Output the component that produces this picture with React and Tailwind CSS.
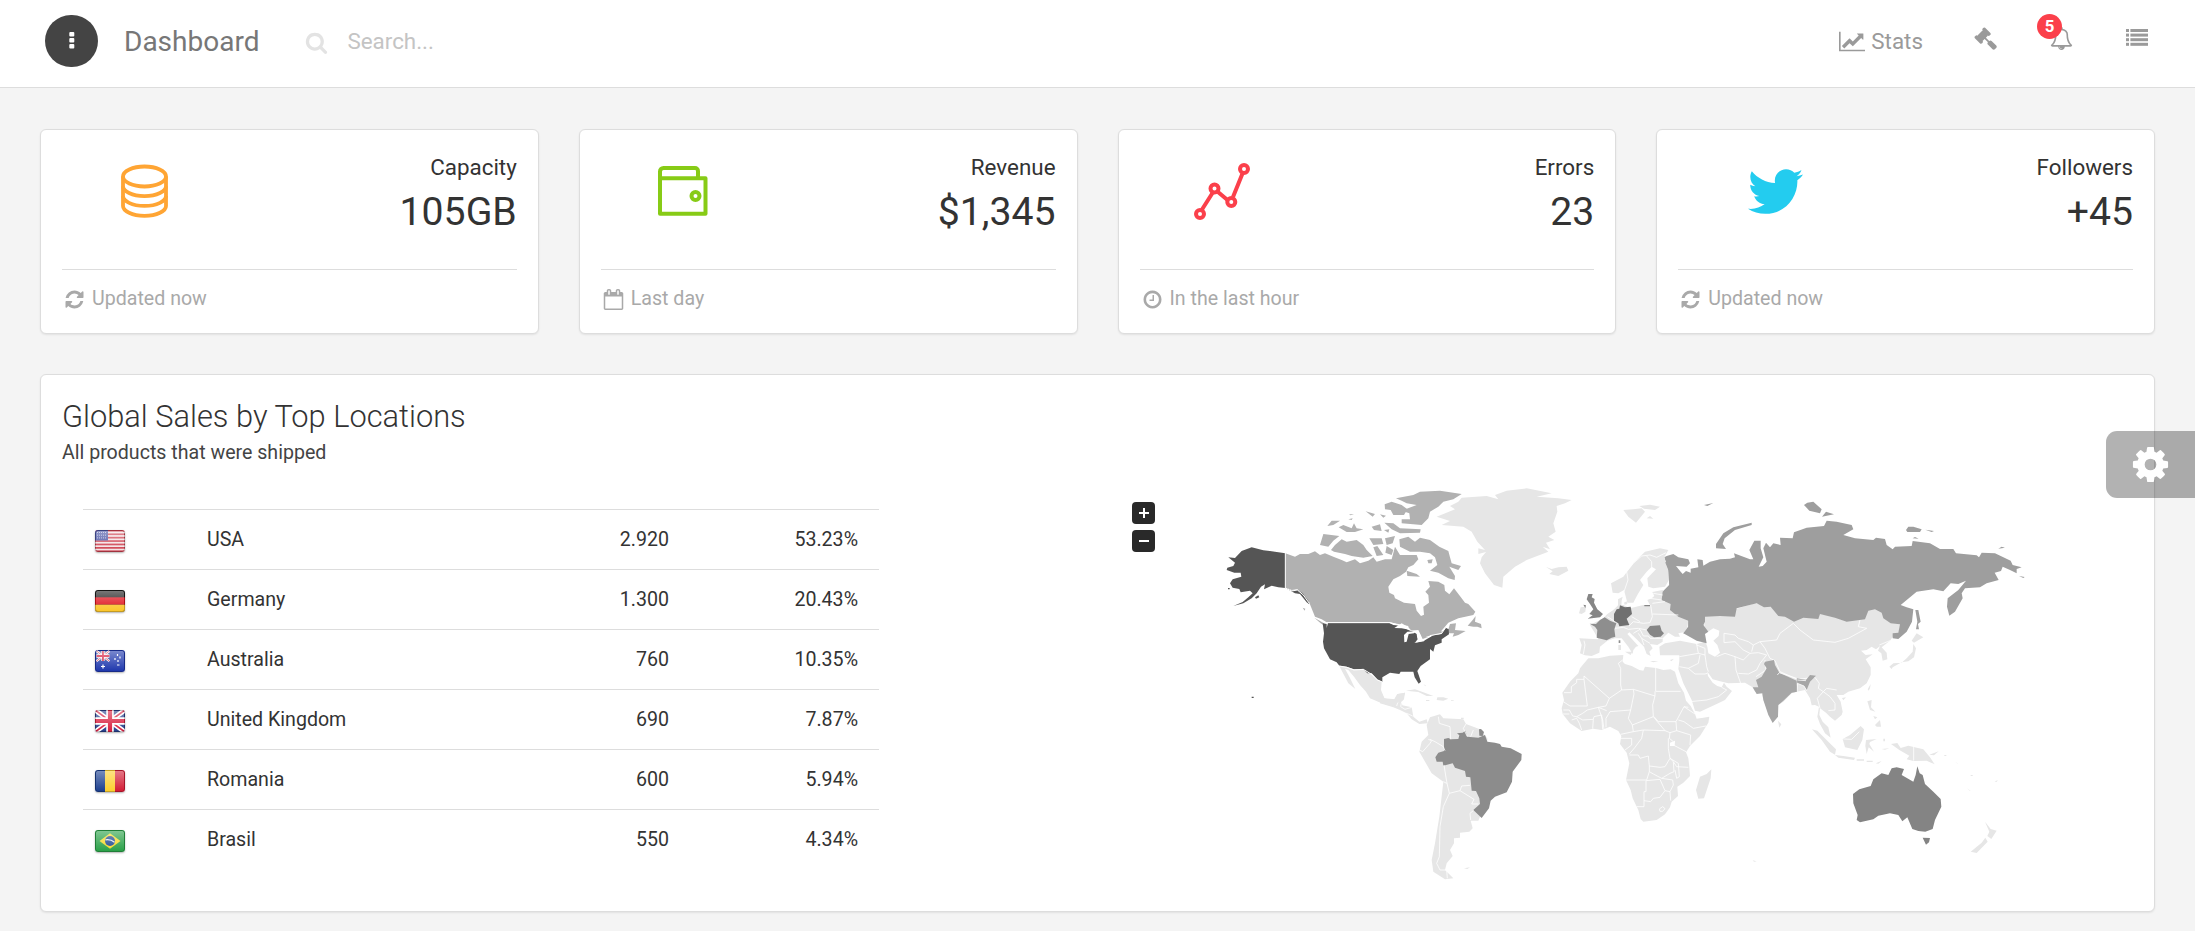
import React from "react";
import { FaTwitter } from "react-icons/fa";

const ICONS = {
  refresh:
    "M1639 1056q0 5-1 7-64 268-268 434.5t-478 166.5q-146 0-282.5-55t-243.5-157l-129 129q-19 19-45 19t-45-19-19-45v-448q0-26 19-45t45-19h448q26 0 45 19t19 45-19 45l-137 137q71 66 161 102t187 36q134 0 250-65t186-179q11-17 53-117 8-23 30-23h192q13 0 22.5 9.5t9.5 22.5zm25-800v448q0 26-19 45t-45 19h-448q-26 0-45-19t-19-45 19-45l138-138q-148-137-349-137-134 0-250 65t-186 179q-11 17-53 117-8 23-30 23h-199q-13 0-22.5-9.5t-9.5-22.5v-7q65-268 270-434.5t480-166.5q146 0 284 55.5t245 156.5l130-129q19-19 45-19t45 19 19 45z",
  chart:
    "M2048 1536v128h-2048v-1536h128v1408h1920zm-128-1248v435q0 21-19.5 29.5t-35.5-7.5l-121-121-633 633q-10 10-23 10t-23-10l-233-233-416 416-192-192 585-585q10-10 23-10t23 10l233 233 464-464-121-121q-16-16-7.5-35.5t29.5-19.5h435q14 0 23 9t9 23z",
  gavel:
    "M1771 1536q0 53-37 90l-107 108q-39 37-91 37-53 0-90-37l-363-364q-38-36-38-90 0-53 43-96l-256-256-126 126q-14 14-34 14t-34-14q2 2 12.5 12t12.5 13 10 11.5 10 13.5 6 13.5 5.5 16.5 1.5 18q0 38-28 68-3 3-16.5 18t-19 20.5-18.5 16.5-22 15.5-22 9-26 4.5q-40 0-68-28l-408-408q-28-28-28-68 0-13 4.5-26t9-22 15.5-22 16.5-18.5 20.5-19 18-16.5q30-28 68-28 10 0 18 1.5t16.5 5.5 13.5 6 13.5 10 11.5 10 13 12.5 12 12.5q-14-14-14-34t14-34l348-348q14-14 34-14t34 14q-2-2-12.5-12t-12.5-13-10-11.5-10-13.5-6-13.5-5.5-16.5-1.5-18q0-38 28-68 3-3 16.5-18t19-20.5 18.5-16.5 22-15.5 22-9 26-4.5q40 0 68 28l408 408q28 28 28 68 0 13-4.5 26t-9 22-15.5 22-16.5 18.5-20.5 19-18 16.5q-30 28-68 28-10 0-18-1.5t-16.5-5.5-13.5-6-13.5-10-11.5-10-13-12.5-12-12.5q14 14 14 34t-14 34l-126 126 256 256q43-43 96-43 52 0 91 37l363 363q37 39 37 91z",
  bell:
    "M912 1696q0-16-16-16-59 0-101.5-42.5t-42.5-101.5q0-16-16-16t-16 16q0 73 51.5 124.5t124.5 51.5q16 0 16-16zm-666-288h1300q-266-300-266-832 0-51-24-105t-69-103-121.5-80.5-169.5-31.5-169.5 31.5-121.5 80.5-69 103-24 105q0 532-266 832zm1482 0q0 52-38 90t-90 38h-448q0 106-75 181t-181 75-181-75-75-181h-448q-52 0-90-38t-38-90q50-42 91-88t85-119.5 74.5-158.5 50-206 19.5-260q0-152 117-282.5t307-158.5q-8-19-8-39 0-40 28-68t68-28 68 28 28 68q0 20-8 39 190 28 307 158.5t117 282.5q0 139 19.5 260t50 206 74.5 158.5 85 119.5 91 88z",
  search:
    "M1216 832q0-185-131.5-316.5t-316.5-131.5-316.5 131.5-131.5 316.5 131.5 316.5 316.5 131.5 316.5-131.5 131.5-316.5zm512 832q0 52-38 90t-90 38q-54 0-90-38l-343-342q-179 124-399 124-143 0-273.5-55.5t-225-150-150-225-55.5-273.5 55.5-273.5 150-225 225-150 273.5-55.5 273.5 55.5 225 150 150 225 55.5 273.5q0 220-124 399l343 343q37 37 37 90z",
  clock:
    "M1024 544v448q0 14-9 23t-23 9h-320q-14 0-23-9t-9-23v-64q0-14 9-23t23-9h224v-352q0-14 9-23t23-9h64q14 0 23 9t9 23zm416 352q0-148-73-273t-198-198-273-73-273 73-198 198-73 273 73 273 198 198 273 73 273-73 198-198 73-273zm224 0q0 209-103 385.5t-279.5 279.5-385.5 103-385.5-103-279.5-279.5-103-385.5 103-385.5 279.5-279.5 385.5-103 385.5 103 279.5 279.5 103 385.5z",
  calendar:
    "M192 1664h1408v-1024h-1408v1024zm384-1216v-288q0-14-9-23t-23-9h-64q-14 0-23 9t-9 23v288q0 14 9 23t23 9h64q14 0 23-9t9-23zm768 0v-288q0-14-9-23t-23-9h-64q-14 0-23 9t-9 23v288q0 14 9 23t23 9h64q14 0 23-9t9-23zm384-64v1280q0 52-38 90t-90 38h-1408q-52 0-90-38t-38-90v-1280q0-52 38-90t90-38h128v-96q0-66 47-113t113-47h64q66 0 113 47t47 113v96h384v-96q0-66 47-113t113-47h64q66 0 113 47t47 113v96h128q52 0 90 38t38 90z",
  cog:
    "M1152 896q0-106-75-181t-181-75-181 75-75 181 75 181 181 75 181-75 75-181zm512-109v222q0 12-8 23t-20 13l-185 28q-19 54-39 91 35 50 107 138 10 12 10 25t-9 23q-27 37-99 108t-94 71q-12 0-26-9l-138-108q-44 23-91 38-16 136-29 186-7 28-36 28h-222q-14 0-24.5-8.5t-11.5-21.5l-28-184q-49-16-90-37l-141 107q-10 9-25 9-14 0-25-11-126-114-165-168-7-10-7-23 0-12 8-23 15-21 51-66.5t54-70.5q-27-50-41-99l-183-27q-13-2-21-12.5t-8-23.5v-222q0-12 8-23t19-13l186-28q14-46 39-92-40-57-107-138-10-12-10-24 0-10 9-23 26-36 98.5-107.5t94.5-71.5q13 0 26 10l138 107q44-23 91-38 16-136 29-186 7-28 36-28h222q14 0 24.5 8.5t11.5 21.5l28 184q49 16 90 37l142-107q9-9 24-9 13 0 25 10 129 119 165 170 7 8 7 22 0 12-8 23-15 21-51 66.5t-54 70.5q26 50 41 98l183 28q13 2 21 12.5t8 23.5z",
};

function Glyph({ name, width = 1792, className }) {
  return (
    <svg viewBox={`0 0 ${width} 1792`} className={className} fill="currentColor">
      <path d={ICONS[name]} />
    </svg>
  );
}

function Header() {
  return (
    <header className="flex h-[88px] items-start border-b border-[#dddddd] bg-white pl-[45px] pr-[47px]">
      <button className="mt-[15px] flex h-[52px] w-[53px] items-center justify-center rounded-full bg-[#444444]">
        <svg viewBox="0 0 6 18" className="-mt-[2px] h-[18px] w-[6px]" fill="#fff">
          <rect x="0.3" y="1" width="5" height="4.4" rx="1" />
          <rect x="0.3" y="7" width="5" height="4.4" rx="1" />
          <rect x="0.3" y="13" width="5" height="4.4" rx="1" />
        </svg>
      </button>
      <h1 className="ml-[26px] mt-[22px] text-[28px] leading-[40px] text-[#777777]">Dashboard</h1>
      <Glyph name="search" className="ml-[46px] mt-[31px] h-[23px] w-[23px] text-[#e3e3e3]" />
      <span className="ml-[19px] mt-[26px] text-[22.4px] leading-[30px] text-[#c4c4c4]">Search...</span>
      <nav className="ml-auto flex items-start text-[#9a9a9a]">
        <Glyph name="chart" width={2048} className="mt-[30px] h-[23px] w-[26px]" />
        <span className="ml-[6px] mt-[26px] text-[22.4px] leading-[30px]">Stats</span>
        <Glyph name="gavel" className="ml-[51px] mt-[27px] h-[23px] w-[23px]" />
        <div className="relative ml-[53px] mt-[27px]">
          <Glyph name="bell" className="h-[23px] w-[23px]" />
          <span className="absolute -left-[13px] -top-[13px] flex h-[25px] w-[25px] items-center justify-center rounded-full bg-[#fb404b] text-[16.8px] font-bold text-white">
            5
          </span>
        </div>
        <svg viewBox="0 0 22 17" className="ml-[53px] mt-[29px] h-[17px] w-[22px]" fill="currentColor">
          {[0, 4.6, 9.2, 13.8].map((y) => (
            <g key={y}>
              <rect x="0" y={y} width="3" height="3" />
              <rect x="4.4" y={y} width="17.6" height="3" />
            </g>
          ))}
        </svg>
      </nav>
    </header>
  );
}

function Database() {
  return (
    <svg viewBox="0 0 47 54" className="ml-[59px] mt-[13px] h-[54px] w-[47px]" fill="none" stroke="#ffa534" strokeWidth="3.8">
      <ellipse cx="23.5" cy="12.5" rx="21.5" ry="10" />
      <path d="M2 12.5V42c0 5 9 9.8 21.5 9.8S45 47 45 42V12.5" />
      <path d="M2 22.3c0 5 9 9.8 21.5 9.8S45 27.3 45 22.3M2 32.1c0 5 9 9.8 21.5 9.8S45 37.1 45 32.1" />
    </svg>
  );
}

function Wallet() {
  return (
    <svg viewBox="0 0 50 50" className="ml-[57px] mt-[15px] h-[50px] w-[50px]" fill="none" stroke="#87cb16" strokeWidth="4">
      <path d="M2 12.5V5.5a3.5 3.5 0 0 1 3.5-3.5h31.5a3 3 0 0 1 3 3V12M2 12.3H47.5V47.8H2Z" strokeLinejoin="round" />
      <circle cx="37.5" cy="30" r="4" />
    </svg>
  );
}

function Graph() {
  return (
    <svg viewBox="0 0 56 57" className="ml-[54px] mt-[12px] h-[57px] w-[56px]" fill="none" stroke="#fb404b" strokeWidth="4">
      <path d="M8 46.5 18.5 30M24 29l9.5 8M39 34 48.5 10.5" />
      <circle cx="6" cy="51" r="4" />
      <circle cx="20.5" cy="25.5" r="4" />
      <circle cx="37.3" cy="39" r="4" />
      <circle cx="50" cy="6" r="4" />
    </svg>
  );
}

function StatCard({ icon, label, value, footIcon, footText }) {
  return (
    <section className="flex h-[205px] min-w-0 flex-1 flex-col rounded-[6px] border border-[#dddddd] bg-white px-[21px] pt-[21px] shadow-[0_1px_2px_rgba(0,0,0,0.08)]">
      <div className="flex h-[119px] justify-between border-b border-[#dddddd]">
        {icon}
        <div className="flex flex-col text-right text-[#333333]">
          <span className="mt-[1px] text-[22.4px] leading-[30px]">{label}</span>
          <span className="mt-[3px] text-[39.2px] leading-[54px]">{value}</span>
        </div>
      </div>
      <div className="mt-[15px] flex items-center text-[#a9a9a9]">
        <Glyph name={footIcon} className="ml-[2px] h-[21px] w-[21px]" />
        <span className="ml-[7px] text-[19.6px] leading-[28px]">{footText}</span>
      </div>
    </section>
  );
}

function UnionJack() {
  return (
    <g>
      <rect width="30" height="22" fill="#27408b" />
      <path d="M0 0 30 22M30 0 0 22" stroke="#fff" strokeWidth="5" />
      <path d="M0 0 30 22M30 0 0 22" stroke="#d8203f" strokeWidth="1.8" />
      <path d="M15 0V22M0 11H30" stroke="#fff" strokeWidth="7.5" />
      <path d="M15 0V22M0 11H30" stroke="#d8203f" strokeWidth="4.2" />
    </g>
  );
}

const FLAGS = {
  us: (
    <g>
      <rect width="30" height="22" fill="#f3e3e5" />
      {[0, 3.4, 6.8, 10.2, 13.6, 17, 20.4].map((y) => (
        <rect key={y} y={y} width="30" height="1.7" fill="#cf4150" />
      ))}
      <rect width="13" height="10.5" fill="#4a55a5" />
      <path d="M2 2.5H12M2 5.2H12M2 7.9H12" stroke="#b8bde2" strokeDasharray="1 1" />
    </g>
  ),
  de: (
    <g>
      <rect width="30" height="22" fill="#1c1c1c" />
      <rect y="7.3" width="30" height="7.4" fill="#e0131d" />
      <rect y="14.7" width="30" height="7.3" fill="#fbc62c" />
    </g>
  ),
  au: (
    <g>
      <rect width="30" height="22" fill="#1f38ad" />
      <g transform="translate(1.5 1) scale(.43 .46)">
        <UnionJack />
      </g>
      <path d="M8 14.5v4M6 16.5h4M20 8v2M22.5 4v2M25 6.5v2M23 10v2M22 15h2.5" stroke="#fff" strokeWidth="1.2" />
    </g>
  ),
  gb: <UnionJack />,
  ro: (
    <g>
      <rect width="10" height="22" fill="#1c3f8f" />
      <rect x="10" width="10" height="22" fill="#fdcf2f" />
      <rect x="20" width="10" height="22" fill="#d31c35" />
    </g>
  ),
  br: (
    <g>
      <rect width="30" height="22" fill="#2aa148" />
      <path d="M4.5 11 15 3.3 25.5 11 15 18.7Z" fill="#f6d92c" />
      <circle cx="15" cy="11" r="5" fill="#234a93" />
      <path d="M10.5 9.8q5-1 9 2.400" stroke="#e9f0f4" fill="none" strokeWidth="1.2" />
    </g>
  ),
};

function Flag({ code }) {
  return (
    <svg viewBox="0 0 30 22" className="h-[22px] w-[30px] rounded-[3px] shadow-[0_1px_2px_rgba(0,0,0,0.3)]">
      <defs>
        <linearGradient id={`gloss-${code}`} x1="0" y1="0" x2="0" y2="1">
          <stop offset="0" stopColor="#fff" stopOpacity=".4" />
          <stop offset="1" stopColor="#fff" stopOpacity="0" />
        </linearGradient>
      </defs>
      {FLAGS[code]}
      <rect x="1" y="1" width="28" height="20" rx="1.5" fill={`url(#gloss-${code})`} />
      <rect x="0.5" y="0.5" width="29" height="21" rx="2.5" fill="none" stroke="#000" strokeOpacity=".22" />
    </svg>
  );
}

const ROWS = [
  ["us", "USA", "2.920", "53.23%"],
  ["de", "Germany", "1.300", "20.43%"],
  ["au", "Australia", "760", "10.35%"],
  ["gb", "United Kingdom", "690", "7.87%"],
  ["ro", "Romania", "600", "5.94%"],
  ["br", "Brasil", "550", "4.34%"],
];

function SalesTable() {
  return (
    <div className="ml-[21px] mt-[42px] w-[796px] text-[19.6px] text-[#333333]">
      {ROWS.map(([code, country, units, share]) => (
        <div key={code} className="flex h-[60px] items-center border-t border-[#dddddd] pl-[12px] pr-[21px]">
          <div className="mt-[2px] w-[112px]">
            <Flag code={code} />
          </div>
          <span className="flex-1">{country}</span>
          <span className="w-[140px] text-right">{units}</span>
          <span className="w-[189px] text-right">{share}</span>
        </div>
      ))}
    </div>
  );
}

const P = ({ c, d }) => <path fill={c} d={d} />;
const LIGHT = "#e6e6e6";
const CA = "#b1b1b1";
const RU = "#9e9e9e";

function WorldMap() {
  return (
    <svg viewBox="1130 480 920 410" className="h-[410px] w-[920px]">
      {/* Africa, South and Central America */}
      <g transform="translate(1380 670) scale(.33333)" strokeLinejoin="round">
        <g fill={LIGHT}>
          <path d="M595 10 L600 -5 L625 -35 L655 -35 L690 -43 L730 -45 L728 -25 L735 -18 L755 -12 L778 0 L790 2 L795 -10 L828 -6 L850 0 L872 -2 L885 5 L895 40 L912 68 L918 92 L932 108 L945 132 L950 146 L988 140 L985 158 L960 198 L930 228 L918 247 L925 265 L928 290 L930 318 L910 338 L892 350 L894 378 L875 395 L870 412 L855 433 L830 450 L790 455 L782 447 L775 420 L758 385 L752 360 L738 330 L748 280 L740 248 L720 222 L724 198 L715 183 L690 170 L665 180 L640 176 L605 183 L570 160 L548 132 L545 115 L552 90 L547 68 L570 35Z" />
          <path d="M140 165 L150 142 L180 133 L190 145 L250 148 L258 162 L300 178 L322 205 L320 380 L300 440 L295 452 L272 452 L278 475 L268 485 L240 488 L240 503 L222 505 L222 520 L210 540 L218 558 L200 580 L195 600 L220 625 L195 628 L160 605 L155 570 L165 520 L178 440 L190 335 L155 310 L118 245 L125 215 L145 195Z" />
          <path d="M0 60 L13 85 L45 88 L52 73 L75 68 L72 88 L65 95 L67 106 L95 112 L100 140 L118 155 L140 148 L143 160 L118 162 L95 148 L80 130 L60 120 L40 112 L0 100Z" />
          <path d="M78 62 L105 58 L128 66 L160 78 L140 78 L115 66Z M172 82 L190 82 L205 86 L190 92 L170 90Z M138 90h10v3h-10z M213 90h8v2h-8z M252 595 L270 592 L262 597Z M130 42l8 5-2 2z M243 143h8v4h-8z" />
        </g>
        <P c="#8c8c8c" d="M166 262 L175 248 L192 243 L192 207 L205 204 L213 208 L235 207 L238 196 L231 190 L248 188 L256 182 L262 200 L295 203 L315 195 L322 215 L345 218 L360 222 L365 230 L392 235 L425 252 L424 270 L398 305 L396 335 L380 367 L345 380 L332 392 L327 415 L305 444 L280 420 L300 402 L298 385 L288 363 L275 362 L271 322 L258 320 L255 303 L225 293 L218 280 L190 287 L188 275 L170 275Z M297 178 L303 177 L312 186 L308 198 L298 197Z" />
        <path
          fill="none"
          stroke="#fff"
          strokeWidth="2.4"
          d="M552 68H574V50L590 38V28H612V18M612 18L688 85L725 60L722 45V-5L715 -20L728 -30M612 28L622 108H570L550 95M688 85L678 108L655 112L622 120L608 130L590 140L578 138M725 60L760 58L762 72L752 120L690 125L678 145V172M760 58L825 78M827 -6V64H902M825 78V64M825 78L818 105L820 140L757 165L745 145L752 120M820 140L832 155L855 182L870 188L890 182L888 155L912 110L925 112M888 155H835L822 140M912 110L945 132M912 155L940 175L978 168M912 155L895 150M870 188L868 205L880 215M890 182L932 195L930 225M757 165L760 185L722 193M760 185L790 180L855 182M790 180L785 205L765 232L748 252M722 205H755V225L735 240M748 255H775L780 265L805 258L808 288L840 292L855 290L870 265M808 288V305L800 330L738 330M808 305L820 312L845 325L870 310L882 305L880 275L870 265M880 275L890 290L925 292M865 235L870 265L895 280L898 320L890 325L885 300M865 235V205M880 225L918 245M798 332L840 328L855 362L870 365L880 345L878 330L845 325M798 332V365H792V410H770M792 392L812 395L820 385L840 382L855 362M870 365L872 392M838 417L848 410L855 416L848 424L840 424ZM578 138L568 120H550M568 132H548M575 150L590 145L598 160L605 180M590 140L608 150L640 148L638 176M640 148L642 140L665 135L668 178M672 178L668 150L655 112M655 112L680 122"
        />
        <path fill="none" stroke="#fff" strokeWidth="2.4" d="M150 208 165 215 190 230 195 242M118 240 128 245 150 220 155 212 145 208M175 140 178 160 210 170 212 208M258 162 250 175 262 200M280 180 272 200M192 285 200 335 208 370 190 410 180 470 178 560 170 580 180 600 200 600M190 335 200 340M208 370 240 362 245 348 270 346M240 362 282 388 275 402 295 402M280 422 270 430 272 450M200 600 202 625M45 88 55 92 50 108M65 95 62 110 75 118 95 112M80 130 98 138" />
        <path fill="#fff" d="M870 218 885 212 884 228 870 228Z" />
      </g>

      {/* Asia */}
      <g transform="translate(1720 470) scale(.33333)">
        <path
          fill={LIGHT}
          d="M-48 440 L0 420 L45 418 L105 400 L155 410 L480 415 L500 450 L541 463 L536 488 L520 498 L510 512 L505 516 L485 532 L500 548 L502 568 L488 572 L484 550 L474 542 L480 528 L468 538 L455 530 L440 540 L423 542 L437 555 L458 553 L437 568 L452 592 L452 615 L440 640 L420 655 L385 665 L370 675 L350 675 L362 695 L368 725 L365 735 L345 752 L330 740 L318 728 L300 715 L298 735 L308 755 L325 772 L332 803 L315 790 L300 762 L292 740 L297 710 L285 705 L275 706 L270 685 L255 660 L230 665 L215 670 L190 695 L175 705 L158 755 L130 690 L125 668 L105 665 L98 652 L75 638 L25 640 L0 634 L-22 628 L-38 605 L-36 618 L-22 638 L-8 648 L5 652 L12 638 L20 650 L36 663 L15 690 L-10 702 L-60 725 L-75 722 L-85 690 L-110 640 L-125 597 L-122 572 L-122 556 L-180 556 L-182 530 L-165 520 L-120 512 L-70 522 L-45 515Z"
        />
        <path
          fill="none"
          stroke="#fff"
          strokeWidth="2.4"
          d="M-70 522 L-65 550 L-122 560M-65 550 L-45 555 L-40 590 L-35 605M-45 555 L-45 535 L-70 525M-122 590 L-95 595 L-65 580 L-60 555M-95 595 L-75 612 L-45 612 L-38 610M-90 695 L-40 690 L-5 680 L20 660 L5 652M-10 560 L15 550 L45 560 L48 600 L62 640M45 560 L70 570 L90 550 L115 548 L140 555 L120 580 L110 600 L85 612 L55 610M12 518 V490 L45 495 L55 505 L85 515 L100 525 L120 515 L170 510 L180 490 L220 460M12 518 L45 515 L70 540 L90 550M100 525 L95 545M120 515 L135 535 L150 565 L165 572 L180 605 L232 628 L285 622 L298 640 L295 655 L310 665 L320 655 L350 660M220 460 L240 480 L280 510 L345 517 L385 505 L440 475 L415 470 L420 450M310 665 L292 685 L300 715M310 665 L330 680 L345 700 L345 720 L325 722M135 570 L138 600 L108 620M478 525 L510 512"
        />
        <path fill="#fff" d="M-36 485 -20 475 -2 482 -4 498 -20 512 -8 525 0 548 -15 560 -35 550 -38 530 -45 512 -52 490Z" />
        <path
          fill={RU}
          d="M-167 262 L-160 258 L-140 252 L-125 262 L-95 268 L-90 280 L-100 290 L-132 288 L-118 305 L-112 312 L-102 303 L-88 308 L-88 296 L-65 292 L-68 268 L-52 270 L-50 287 L-30 275 L0 268 L30 266 L45 262 L42 250 L90 268 L100 268 L88 240 L103 212 L122 212 L122 235 L130 262 L116 290 L128 288 L140 275 L130 235 L138 218 L150 232 L160 220 L182 225 L180 203 L218 205 L222 187 L260 173 L312 168 L320 152 L350 155 L395 165 L400 178 L370 195 L405 205 L460 210 L468 203 L495 207 L500 225 L518 238 L525 230 L575 228 L578 213 L630 220 L660 237 L700 237 L708 250 L770 256 L777 262 L785 248 L825 250 L872 272 L878 285 L905 292 L890 297 L890 310 L870 300 L848 290 L843 303 L824 308 L836 330 L800 340 L780 352 L735 355 L725 370 L728 385 L705 425 L688 437 L681 410 L683 385 L715 360 L738 332 L715 342 L692 340 L670 364 L640 358 L590 365 L542 405 L560 412 L580 418 L576 455 L560 485 L535 507 L518 505 L518 490 L535 488 L540 463 L512 460 L490 445 L485 428 L465 418 L445 422 L435 448 L380 455 L345 443 L300 432 L295 447 L250 443 L222 455 L195 440 L175 438 L152 410 L132 412 L110 400 L50 415 L45 440 L0 438 L-45 440 L-45 455 L-50 465 L-35 485 L-45 492 L-40 520 L-70 512 L-110 490 L-95 470 L-95 452 L-125 440 L-150 420 L-148 402 L-175 390 L-172 365 L-152 345 L-155 300 L-162 278Z M-12 235 L-12 222 L10 190 L40 172 L95 158 L95 165 L45 180 L14 205 L8 222 L18 237Z M252 105 L262 98 L280 95 L305 118 L300 130 L268 122Z M306 140 L318 125 L342 133Z M558 180 L565 170 L580 170 L605 178 L600 186 L562 186Z M616 179 L642 183 L635 186Z M578 205 L585 201 L596 206Z M835 236 L845 230 L855 233Z M586 420 L595 420 L602 455 L594 462 L597 478 L588 478 L592 455Z M897 318 L914 321 L910 324Z M-48 105 L-20 99 L-38 108Z"
        />
        <path fill={LIGHT} d="M508 590 L520 580 L545 578 L560 565 L578 545 L580 522 L588 535 L582 562 L565 574 L545 577 L518 592 L515 597Z M575 512 L590 490 L610 502 L592 512 L582 518Z M443 658 L452 642 L450 655 L446 662Z M366 684 L378 682 L370 691Z" />
      </g>

      {/* North America */}
      <g transform="translate(1200 470) scale(.33333)">
        <path fill={LIGHT} d="M418 588 L440 592 L462 600 L490 598 L515 615 L545 636 L543 660 L553 685 L580 692 L592 672 L615 668 L610 685 L590 700 L580 708 L545 700 L510 685 L498 665 L480 645 L462 620 L445 600 L435 596 L448 620 L466 657 L445 640 L432 615Z" />
        <P c={CA} d="M256 250 L285 260 L300 252 L325 252 L345 244 L360 255 L375 250 L400 260 L425 270 L440 277 L465 268 L480 280 L505 272 L520 262 L530 275 L555 268 L575 268 L585 230 L600 255 L650 255 L655 268 L640 285 L625 292 L618 305 L600 318 L580 328 L565 350 L568 368 L582 375 L585 385 L612 398 L645 402 L650 422 L663 438 L672 434 L670 410 L687 398 L685 375 L676 365 L690 350 L685 333 L715 335 L733 345 L735 362 L748 373 L762 355 L785 385 L795 398 L805 402 L826 425 L820 435 L775 445 L745 458 L722 485 L745 478 L750 462 L768 460 L765 480 L797 483 L775 495 L758 500 L762 490 L725 490 L695 497 L668 507 L655 480 L625 482 L625 468 L598 463 L570 457 L380 457 L365 448 L345 440 L328 398 L312 380 L292 358 L275 360 L256 352Z M803 467 L818 450 L827 438 L825 455 L843 462 L845 475 L832 470 L820 470Z M598 208 L625 200 L645 215 L660 203 L690 210 L718 230 L745 243 L750 262 L755 280 L783 288 L775 300 L748 290 L765 318 L764 330 L745 325 L715 308 L690 302 L712 285 L705 262 L690 250 L660 245 L630 245 L600 230Z M588 85 L640 75 L660 65 L720 62 L785 72 L760 88 L730 95 L715 110 L690 125 L685 145 L665 165 L605 160 L605 148 L630 148 L628 130 L605 122 L650 105 L620 100 L605 92Z M554 103 L575 95 L605 105 L622 118 L612 135 L580 135 L572 120 L555 118Z M553 158 L580 160 L600 175 L662 178 L660 188 L600 190 L575 178Z M393 240 L405 225 L425 208 L440 215 L470 210 L490 225 L500 240 L518 258 L490 263 L455 258 L435 252 L402 245Z M360 225 L370 192 L418 198 L400 212 L385 230Z M416 172 L430 165 L455 175 L462 160 L470 175 L490 178 L465 186 L440 186Z M382 168 L395 152 L420 152 L400 165Z M508 205 L545 205 L550 222 L520 225Z M555 205 L585 198 L578 220 L560 225Z M520 232 L532 228 L550 255 L530 258Z M560 228 L580 240 L575 255 L556 248Z M515 170 L540 163 L545 183 L522 180Z M497 124 L525 132 L518 140Z M540 133 L558 137 L550 143Z M552 180 L568 178 L565 188Z M620 302 L650 312 L660 320 L622 318Z M447 133 L462 133 L452 136Z M445 148 L458 145 L455 150Z M343 443 L372 460 L380 472 L362 460Z M682 270 L698 268 L695 280 L685 280Z M308 413l8 3-2 6z" />
        <P c="#555555" d="M256 250 L225 245 L190 241 L155 232 L125 243 L105 264 L85 262 L105 278 L100 288 L82 293 L80 300 L103 308 L122 308 L124 320 L98 328 L90 340 L98 353 L118 357 L122 367 L150 362 L158 370 L145 382 L128 396 L100 408 L130 400 L155 385 L170 370 L183 350 L195 343 L192 358 L215 347 L235 352 L256 354 L285 370 L300 372 L320 397 L328 403 L325 392 L308 370 L292 360 L275 362 L256 352Z M165 382 L175 376 L178 382 L168 386Z M84 354h5v4h-5z M155 680h6v4h-6z M368 460 L380 462 L380 474 L384 459 L568 459 L580 465 L610 468 L625 480 L652 490 L655 505 L645 518 L672 512 L700 496 L725 492 L737 473 L746 478 L747 493 L725 508 L725 518 L705 526 L700 545 L690 537 L690 568 L662 588 L652 603 L663 635 L656 641 L644 622 L640 605 L602 605 L598 612 L570 608 L547 622 L547 636 L532 628 L515 610 L502 610 L490 597 L462 598 L440 590 L418 587 L410 577 L390 568 L372 535 L369 515 L372 490Z" />
        <path fill="#fff" d="M583 474 L605 460 L625 472 L635 483 L620 478 L605 475Z M613 517 L612 495 L622 485 L648 484 L642 490 L626 492 L620 515Z M640 485 L655 484 L663 498 L660 508 L652 506 L650 492Z M642 519 L675 506 L672 514Z M675 502l20-7-3 6z" />
        <path fill="none" stroke="#fff" strokeWidth="3" d="M256 248V354L275 363L292 360L310 375L328 400M380 458H570L598 466M690 497L725 490L737 473M418 588L440 592L462 600L490 598L515 613L532 630L547 636" />
      </g>

      {/* Greenland and Europe */}
      <g transform="translate(1420 470) scale(.33333)">
        <path fill={LIGHT} d="M50 140 L105 118 L90 108 L115 95 L125 83 L200 78 L235 88 L225 75 L260 62 L320 55 L395 70 L350 80 L415 85 L455 90 L435 100 L410 108 L412 125 L400 160 L407 185 L385 200 L403 210 L378 218 L390 238 L368 230 L385 245 L320 270 L285 290 L250 320 L247 353 L222 345 L195 310 L180 280 L185 262 L198 246 L175 252 L175 235 L195 240 L172 215 L155 185 L130 170 L65 165 L90 153Z M378 291 L395 297 L415 292 L440 290 L445 302 L415 318 L388 312 L398 304Z M610 120 L640 118 L665 115 L675 125 L648 158 L625 140Z M658 108 L690 104 L720 110 L705 120 L672 116Z M680 145 L690 138 L700 146Z" />
        <path fill={LIGHT} d="M573 340 L610 320 L640 280 L675 245 L720 235 L745 240 L733 262 L745 300 L750 325 L735 350 L700 355 L685 350 L682 325 L708 298 L695 290 L680 305 L660 330 L670 345 L652 375 L640 398 L622 398 L612 360 L595 370 L578 368Z M594 405 L594 388 L608 380 L605 392 L604 408Z M612 398l8-4 2 8-8 2z" />
        <path fill={LIGHT} d="M478 505 L535 508 L525 490 L510 465 L550 445 L562 432 L580 420 L595 405 L610 405 L630 415 L670 405 L690 405 L682 390 L695 385 L703 378 L697 366 L728 360 L760 400 L805 452 L800 485 L775 490 L780 500 L765 500 L745 488 L728 505 L728 515 L712 525 L690 522 L698 535 L688 545 L692 558 L680 552 L672 530 L650 508 L628 487 L622 492 L655 528 L648 530 L640 540 L638 552 L625 530 L605 505 L585 505 L562 512 L540 530 L538 548 L515 558 L495 556 L480 550 L485 525Z M615 545 L637 545 L632 555Z M477 430 L482 412 L498 410 L496 425 L485 432Z M595 525h8v15h-8z M690 573 L715 573 L700 577Z M750 570l12-4-8 8z" />
        <path fill={RU} d="M735 275 L745 300 L748 345 L728 365 L725 390 L752 402 L750 420 L775 440 L805 452 L805 470 L790 490 L850 490 L850 320 L790 320Z" />
        <path fill="none" stroke="#fff" strokeWidth="2.4" d="M612 365 L624 330 L620 305 L640 280 L665 258 L690 255 L710 262 L738 248M680 258 L695 275 L695 292M492 512 L495 525 L490 552M585 475 L610 472 L625 478 L655 475 L680 480M627 468 L640 455 L670 460 L690 458 L697 440 L692 405M635 440 L660 455M697 432 L775 435M690 385 L725 390M700 370 L728 375M697 400 L735 395M640 490 L660 478 L670 498 L685 498M655 490 L665 505 L690 520M685 498 L690 505 L728 505M665 505 L672 525M562 440 L578 450 L585 455" />
        <P c="#8e8e8e" d="M509 461 L528 462 L540 450 L554 442 L570 452 L589 460 L583 478 L586 500 L575 503 L560 511 L530 503 L532 480 L525 470Z M596 511h5v8h-5z" />
        <P c="#707070" d="M582 432 L590 418 L598 416 L600 406 L615 412 L632 410 L636 432 L620 446 L628 465 L598 469 L595 460 L582 452Z" />
        <P c="#868686" d="M680 480 L690 468 L720 466 L725 482 L732 490 L722 500 L702 502 L690 494Z M500 388 L505 372 L518 372 L515 382 L524 387 L522 398 L532 418 L549 432 L540 442 L503 446 L518 436 L508 432 L520 418 L510 402Z M490 404l8 2-2 8z M673 405h17v4h-17z" />
      </g>

      {/* South Asia and Oceania */}
      <g transform="translate(1700 660) scale(.33333)">
        <P c="#a6a6a6" d="M195 5 L222 0 L225 15 L238 38 L290 62 L292 95 L275 98 L250 122 L235 135 L234 170 L218 189 L205 165 L190 120 L187 100 L170 102 L158 82 L175 82 L168 60 L185 50 L200 25 L192 12Z M290 55 L318 60 L330 45 L348 47 L330 65 L320 90 L312 78 L292 70Z" />
        <path fill="none" stroke="#fff" strokeWidth="2.4" d="M232 45 238 38 290 55M292 60 318 62M292 96 292 70 312 78 320 92" />
        <path fill={LIGHT} d="M234 182 L244 193 L238 203Z M336 208 L352 212 L385 245 L408 268 L405 284 L390 275 L365 240Z M405 285 L430 288 L465 293 L462 300 L415 293Z M470 298h22v4h-22z M500 302h18v4h-18z M527 310l18-7-10 8z M428 237 L450 225 L482 198 L492 208 L487 240 L472 270 L435 262Z M498 240 L530 237 L510 246 L508 252 L522 275 L506 262 L500 282 L496 258Z M502 124 L515 120 L513 142 L526 155 L510 150Z M525 195 L540 180 L543 200 L530 200Z M520 168 L532 172 L525 178Z M550 236h5v8h-5z M545 267 L568 265 L555 269Z M573 252 L592 249 L602 264 L625 257 L670 268 L690 292 L704 313 L680 302 L640 303 L620 298 L628 287 L598 270Z M688 284 L716 274 L702 286Z M733 285h6v3h-6z M765 305l10 6-4-1z M812 345h6v3h-6z M800 384l12 9-3-1z M884 364l10-3-5 5z M855 485 L872 507 L890 512 L874 537 L862 528 L868 515Z M856 533 L863 545 L830 579 L812 575 L845 548Z M158 601 L170 604 L162 605Z M34 328 L32 355 L12 415 L-5 416 L-12 390 L0 350 L20 342Z" />
        <path fill="none" stroke="#fff" strokeWidth="2.4" d="M641 258V302M430 237 455 238 478 215M0 172 25 168" />
        <P c="#848484" d="M459 402 L478 388 L512 378 L520 358 L545 340 L565 345 L575 325 L590 322 L612 327 L605 345 L640 365 L647 345 L652 319 L659 340 L668 345 L675 372 L700 395 L722 417 L724 440 L705 480 L698 507 L676 515 L655 513 L637 507 L622 472 L607 484 L595 465 L570 460 L535 467 L520 478 L480 487 L470 480 L473 465 L460 430Z M668 533 L690 534 L687 547 L678 554Z" />
      </g>
    </svg>
  );
}

function ZoomButton({ children }) {
  return (
    <button className="flex h-[22px] w-[23px] items-center justify-center rounded-[4px] bg-[#292929] text-white">
      <svg viewBox="0 0 12 12" className="h-[12px] w-[12px]" stroke="currentColor" strokeWidth="2" fill="none">
        {children}
      </svg>
    </button>
  );
}

export default function App() {
  return (
    <div className="relative h-[931px] w-full overflow-hidden bg-[#f4f4f4] font-['Roboto',sans-serif]">
      <Header />
      <main className="px-[40px] pt-[41px]">
        <div className="flex gap-[40px]">
          <StatCard icon={<Database />} label="Capacity" value="105GB" footIcon="refresh" footText="Updated now" />
          <StatCard icon={<Wallet />} label="Revenue" value="$1,345" footIcon="calendar" footText="Last day" />
          <StatCard icon={<Graph />} label="Errors" value="23" footIcon="clock" footText="In the last hour" />
          <StatCard
            icon={<FaTwitter className="ml-[70px] mt-[13px] h-[55px] w-[55px] text-[#23ccef]" />}
            label="Followers"
            value="+45"
            footIcon="refresh"
            footText="Updated now"
          />
        </div>
        <section className="mt-[40px] flex h-[538px] rounded-[6px] border border-[#dddddd] bg-white pl-[21px] shadow-[0_1px_2px_rgba(0,0,0,0.08)]">
          <div className="w-[1070px] pt-[21px]">
            <h2 className="text-[30.8px] font-light leading-[42px] text-[#333333]">Global Sales by Top Locations</h2>
            <p className="mt-[1px] text-[19.6px] leading-[28px] text-[#444444]">All products that were shipped</p>
            <SalesTable />
          </div>
          <div className="flex flex-col gap-[6px] pt-[127px]">
            <ZoomButton>
              <path d="M6 1V11M1 6H11" />
            </ZoomButton>
            <ZoomButton>
              <path d="M1 6H11" />
            </ZoomButton>
          </div>
          <div className="-ml-[25px] pt-[105px]">
            <WorldMap />
          </div>
        </section>
      </main>
      <div className="absolute right-0 top-[431px] flex h-[67px] w-[89px] items-center justify-center rounded-l-[11px] bg-black/30">
        <Glyph name="cog" className="h-[41px] w-[41px] text-white" />
      </div>
    </div>
  );
}
